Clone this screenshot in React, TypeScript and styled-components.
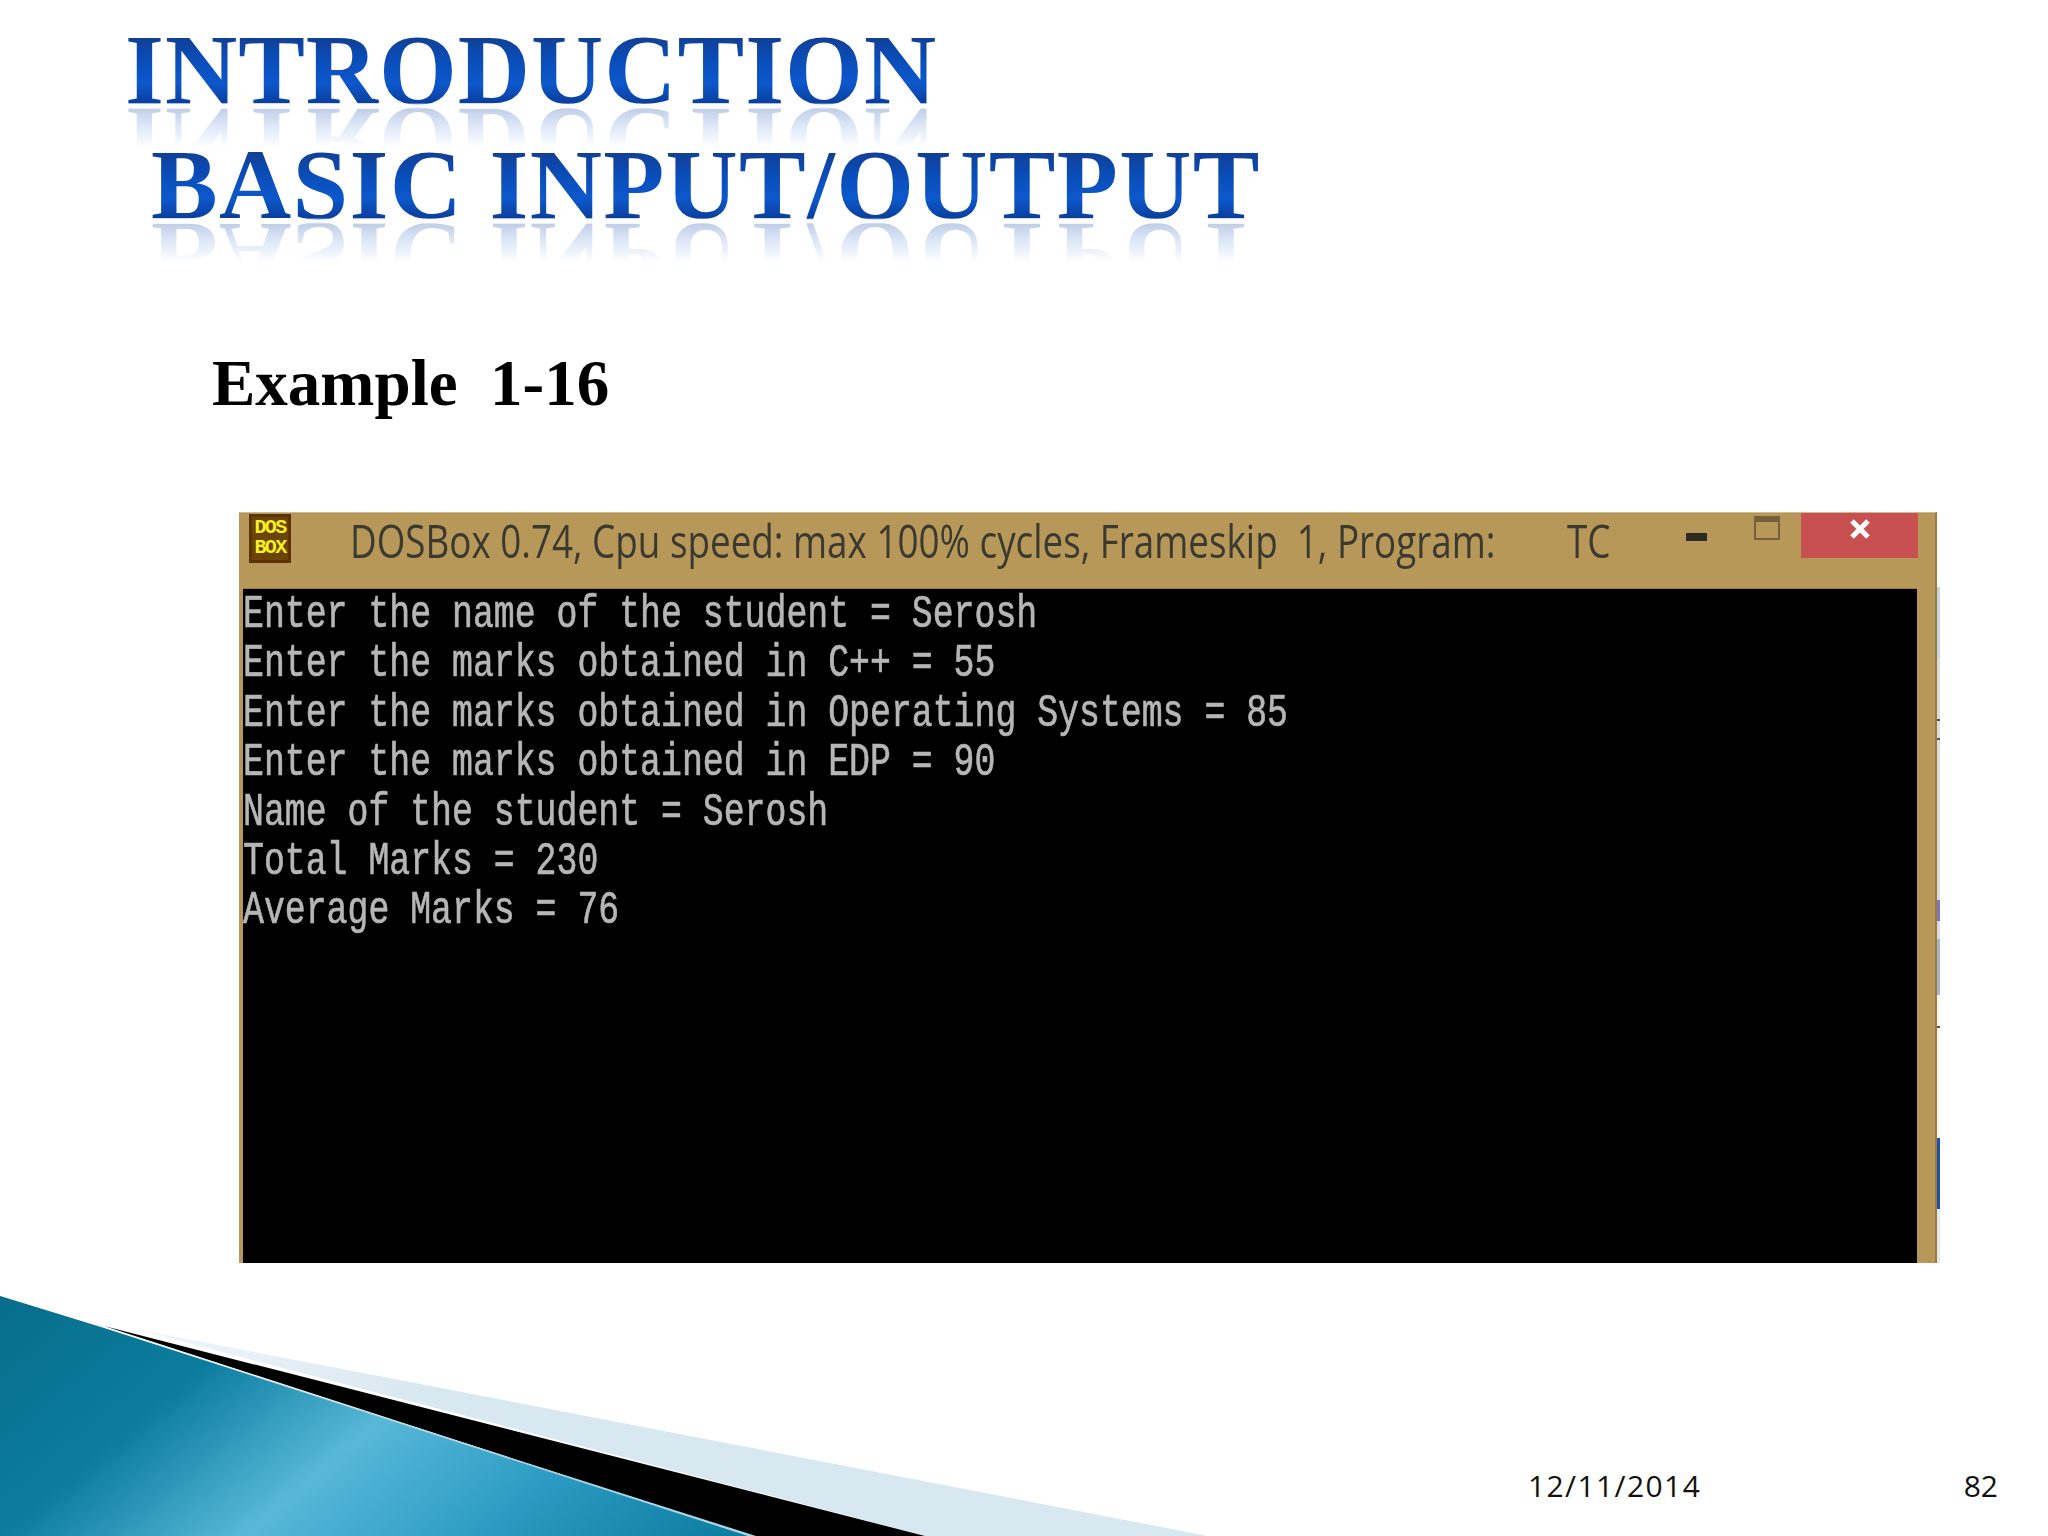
import React from "react";
import styled, { createGlobalStyle } from "styled-components";

const Global = createGlobalStyle`
  html, body { margin: 0; padding: 0; background: #fff; }
`;

const Slide = styled.div`
  position: relative;
  width: 2048px;
  height: 1536px;
  overflow: hidden;
  background: #fff;
  display: flex;
  flex-direction: column;
`;

const Swoosh = styled.svg`
  position: absolute;
  left: 0;
  bottom: 0;
  width: 1300px;
  height: 296px;
`;

const TitleBlock = styled.header`
  position: relative;
  padding: 12px 0 0 125px;
  font-family: "Liberation Serif", serif;
  font-weight: 700;
  font-size: 100px;
  line-height: 115px;
  filter: blur(0.6px);
`;

const TitleLine = styled.div<{ $indent: number; $spacing: number }>`
  width: max-content;
  margin-left: ${(p) => p.$indent}px;
  letter-spacing: ${(p) => p.$spacing}px;
  white-space: nowrap;
  color: transparent;
  background: linear-gradient(180deg, #ffffff 0 20%, #123f96 22%, #0a4cb6 40%, #0c58cc 62%, #0a3f9e 79%, #ffffff 81%);
  -webkit-background-clip: text;
  background-clip: text;
  -webkit-box-reflect: below -42px linear-gradient(transparent 46%, rgba(255, 255, 255, 0.26) 80%);
`;

const Heading = styled.h1`
  position: relative;
  margin: 103px 0 0 212px;
  font-family: "Liberation Serif", serif;
  font-weight: 700;
  font-size: 65px;
  line-height: 76px;
  color: #000;
  white-space: pre;
`;

const WindowRow = styled.div`
  position: relative;
  display: flex;
  margin: 91px 0 0 239px;
`;

const DosWindow = styled.section`
  width: 1698px;
  height: 751px;
  display: flex;
  flex-direction: column;
  background: #b89858;
  border-right: 2px solid #9a7c42;
  border-top: 1px solid #cdbb90;
  box-sizing: border-box;
`;

const EdgeStrip = styled.div`
  width: 3px;
  height: 751px;
  background: linear-gradient(
    180deg,
    #fff 0 75px,
    #c4d4e4 75px 146px,
    #d8dcdc 146px 207px,
    #555 207px 209px,
    #d8dcdc 209px 226px,
    #555 226px 228px,
    #d8dcdc 228px 388px,
    #7a78b8 388px 409px,
    #d8dcdc 409px 427px,
    #a4b4cc 427px 483px,
    #f8f4ec 483px 514px,
    #555 514px 516px,
    #f8f4ec 516px 626px,
    #2050a8 626px 697px,
    #e4e8ec 697px
  );
`;

const TitleBar = styled.div`
  height: 75px;
  flex: none;
  display: flex;
  align-items: flex-start;
  padding-left: 10px;
`;

const AppIcon = styled.div`
  flex: none;
  width: 42px;
  height: 49px;
  margin-top: 1px;
  box-sizing: border-box;
  border: 3px solid #5c3408;
  background: #6a4408;
  color: #f8f020;
  font-family: "Liberation Mono", monospace;
  font-weight: 700;
  font-size: 20px;
  letter-spacing: -1.6px;
  line-height: 20px;
  text-align: center;
  padding-top: 1px;
`;

const Caption = styled.div`
  flex: none;
  width: 1143px;
  margin: 0 0 0 59px;
  color: #3a3a30;
  font-family: "Open Sans", sans-serif;
  font-size: 46px;
  line-height: 55px;
  white-space: pre;
  transform: scaleX(0.8);
  transform-origin: left top;
`;

const CaptionTail = styled(Caption)`
  width: 43px;
  margin-left: 74px;
`;

const Minimize = styled.div`
  flex: none;
  width: 21px;
  height: 8px;
  margin: 20px 0 0 76px;
  background: #2c2a22;
`;

const Restore = styled.div`
  flex: none;
  width: 26px;
  height: 24px;
  margin: 3px 0 0 47px;
  box-sizing: border-box;
  border: 2px solid #74603a;
  border-top-width: 6px;
`;

const CloseButton = styled.div`
  flex: none;
  width: 117px;
  height: 45px;
  margin-left: 21px;
  background: #c85050;
  display: flex;
  justify-content: center;
  padding-top: 5px;
  box-sizing: border-box;
`;

const Terminal = styled.div`
  flex: 1;
  margin: 0 18px 0 4px;
  padding-top: 1px;
  background: #000;
  border-top: 1px solid #9a7c42;
  color: #b6b6b6;
  font-family: "Liberation Mono", monospace;
  font-size: 47px;
  line-height: 49.4px;
  overflow: hidden;
  -webkit-text-stroke: 0.7px #b6b6b6;
`;

const TermLine = styled.div`
  white-space: pre;
  transform: scaleX(0.741);
  transform-origin: left top;
`;

const Footer = styled.footer`
  position: relative;
  margin-top: auto;
  display: flex;
  align-items: center;
  height: 40px;
  padding: 0 50px 31px 1528px;
  color: #111;
  font-family: "Open Sans", sans-serif;
  font-size: 30px;
`;

const DateLabel = styled.span`
  letter-spacing: 1.4px;
`;

const PageNumber = styled.span`
  margin-left: auto;
`;

const lines = [
  "Enter the name of the student = Serosh",
  "Enter the marks obtained in C++ = 55",
  "Enter the marks obtained in Operating Systems = 85",
  "Enter the marks obtained in EDP = 90",
  "Name of the student = Serosh",
  "Total Marks = 230",
  "Average Marks = 76",
];

export default function App() {
  return (
    <Slide>
      <Global />
      <Swoosh viewBox="0 0 1300 296" aria-hidden="true">
        <defs>
          <linearGradient id="teal" gradientUnits="userSpaceOnUse" x1="0" y1="0" x2="458" y2="542">
            <stop offset="0" stopColor="#066a86" />
            <stop offset="0.32" stopColor="#0b7c9e" />
            <stop offset="0.54" stopColor="#58b8d8" />
            <stop offset="0.75" stopColor="#2d9cc4" />
            <stop offset="1" stopColor="#0a7a9e" />
          </linearGradient>
          <linearGradient id="pale" gradientUnits="userSpaceOnUse" x1="150" y1="0" x2="700" y2="0">
            <stop offset="0" stopColor="#f0f6fa" />
            <stop offset="0.5" stopColor="#d8e8f0" />
            <stop offset="1" stopColor="#d8e8f0" />
          </linearGradient>
        </defs>
        <polygon points="130,88 1208,296 925,296" fill="url(#pale)" />
        <polygon points="104,86 925,296 752,296 166,106" fill="#000" />
        <polygon points="0,56 104,88 756,296 0,296" fill="#a8d4e4" />
        <polygon points="0,56 104,88 748,296 0,296" fill="url(#teal)" />
      </Swoosh>
      <TitleBlock>
        <TitleLine $indent={0} $spacing={1}>INTRODUCTION</TitleLine>
        <TitleLine $indent={26} $spacing={1.3}>BASIC INPUT/OUTPUT</TitleLine>
      </TitleBlock>
      <Heading>Example  1-16</Heading>
      <WindowRow>
        <DosWindow>
          <TitleBar>
            <AppIcon>
              DOS
              <br />
              BOX
            </AppIcon>
            <Caption>DOSBox 0.74, Cpu speed: max 100% cycles, Frameskip  1, Program:</Caption>
            <CaptionTail>TC</CaptionTail>
            <Minimize />
            <Restore />
            <CloseButton>
              <svg width="22" height="22" viewBox="0 0 22 22" aria-hidden="true">
                <path d="M3 3 L19 19 M19 3 L3 19" stroke="#fff" strokeWidth="5" fill="none" />
              </svg>
            </CloseButton>
          </TitleBar>
          <Terminal>
            {lines.map((l) => (
              <TermLine key={l}>{l}</TermLine>
            ))}
          </Terminal>
        </DosWindow>
        <EdgeStrip />
      </WindowRow>
      <Footer>
        <DateLabel>12/11/2014</DateLabel>
        <PageNumber>82</PageNumber>
      </Footer>
    </Slide>
  );
}
